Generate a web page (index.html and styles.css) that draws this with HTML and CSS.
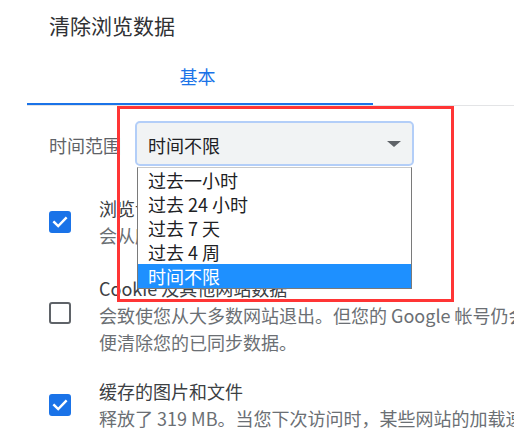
FILE: index.html
```html
<!DOCTYPE html>
<html lang="zh-CN">
<head>
<meta charset="utf-8">
<title>清除浏览数据</title>
<link rel="stylesheet" href="styles.css">
</head>
<body>
<div class="dialog">
  <h1 class="title">清除浏览数据</h1>
  <div class="tabs">
    <div class="tab tab-active">基本</div>
  </div>

  <div class="range-row">
    <span class="range-label">时间范围</span>
    <div class="select-wrap">
      <div class="select">
        <span class="select-value">时间不限</span>
        <span class="select-arrow"></span>
      </div>
      <ul class="dropdown">
        <li class="dropdown-item">过去一小时</li>
        <li class="dropdown-item">过去 24 小时</li>
        <li class="dropdown-item">过去 7 天</li>
        <li class="dropdown-item">过去 4 周</li>
        <li class="dropdown-item dropdown-item-selected">时间不限</li>
      </ul>
    </div>
  </div>

  <div class="options">
    <div class="option option-first">
      <span class="checkbox checkbox-checked">
        <svg viewBox="0 0 22 22" width="22" height="22"><path d="M5.2 11.2 L9.2 15 L16.8 7.2" fill="none" stroke="#fff" stroke-width="2.4" stroke-linecap="square"/></svg>
      </span>
      <div class="option-text">
        <div class="option-title">浏览记录</div>
        <div class="option-sub">会从所有已同步的设备中清除历史记录</div>
      </div>
    </div>

    <div class="option option-second">
      <span class="checkbox checkbox-raised"></span>
      <div class="option-text">
        <div class="option-title">Cookie 及其他网站数据</div>
        <div class="option-sub">会致使您从大多数网站退出。但您的 Google 帐号仍会保持登录状态，以</div>
        <div class="option-sub">便清除您的已同步数据。</div>
      </div>
    </div>

    <div class="option option-third">
      <span class="checkbox checkbox-checked">
        <svg viewBox="0 0 22 22" width="22" height="22"><path d="M5.2 11.2 L9.2 15 L16.8 7.2" fill="none" stroke="#fff" stroke-width="2.4" stroke-linecap="square"/></svg>
      </span>
      <div class="option-text">
        <div class="option-title">缓存的图片和文件</div>
        <div class="option-sub">释放了 319 MB。当您下次访问时，某些网站的加载速度可能会更慢。</div>
      </div>
    </div>
  </div>

  <div class="highlight-box"></div>
</div>
</body>
</html>
```

FILE: styles.css
```css
html, body {
  margin: 0;
  padding: 0;
  background: #ffffff;
  overflow: hidden;
}

body {
  width: 514px;
  height: 442px;
  font-family: "Noto Sans CJK SC", "Noto Sans", sans-serif;
  color: #202124;
}

.dialog {
  position: relative;
  width: 760px;
}

.title {
  margin: 0;
  padding: 11px 0 2px 49px;
  font-size: 21px;
  font-weight: normal;
  line-height: 28px;
  color: #303134;
}

.tabs {
  display: flex;
  margin-left: 27px;
  border-bottom: 1px solid #e3e4e6;
}

.tab {
  width: 346px;
  box-sizing: border-box;
  padding: 21px 5px 13px 0;
  font-size: 18px;
  line-height: 28px;
  text-align: center;
  color: #5f6368;
  border-bottom: 2px solid transparent;
}

.tab-active {
  color: #1a73e8;
  border-bottom-color: #1a73e8;
}

.range-row {
  display: flex;
  align-items: center;
  margin-top: 15px;
  padding-left: 49px;
}

.range-label {
  width: 86px;
  padding-top: 2px;
  font-size: 18px;
  line-height: 28px;
  color: #5f6368;
  white-space: nowrap;
}

.select-wrap {
  position: relative;
}

.select {
  display: flex;
  align-items: center;
  justify-content: space-between;
  box-sizing: border-box;
  width: 279px;
  height: 45px;
  padding: 2px 11px 0 11px;
  background: #f1f3f4;
  border: 2px solid #b3cef8;
  border-radius: 5px;
}

.select-value {
  font-size: 18px;
  line-height: 28px;
  color: #202124;
}

.select-arrow {
  width: 0;
  height: 0;
  margin-top: -2px;
  border-left: 7px solid transparent;
  border-right: 7px solid transparent;
  border-top: 6px solid #5f6368;
}

.dropdown {
  position: absolute;
  top: 46px;
  left: 2px;
  width: 275px;
  box-sizing: border-box;
  margin: 0;
  padding: 0;
  list-style: none;
  background: #ffffff;
  border: 1px solid #7a7a7a;
  border-top-color: #c9c9c9;
  z-index: 2;
}

.dropdown-item {
  height: 24px;
  padding-left: 10px;
  font-size: 18px;
  line-height: 24px;
  color: #202124;
  white-space: nowrap;
}

.dropdown-item-selected {
  background: #1e90ff;
  color: #ffffff;
}

.options {
  padding-left: 49px;
}

.option {
  display: flex;
  align-items: center;
}

.option-first {
  margin-top: 28px;
}

.option-second {
  margin-top: 25px;
}

.option-third {
  margin-top: 21px;
}

.checkbox {
  flex: none;
  display: block;
  box-sizing: border-box;
  width: 22px;
  height: 22px;
  border-radius: 3px;
  border: 2px solid #5f6368;
}

.checkbox svg {
  display: block;
  margin: -2px;
}

.checkbox-checked {
  background: #1a73e8;
  border-color: #1a73e8;
}

.checkbox-raised {
  margin-bottom: 5px;
}

.option-text {
  margin-left: 28px;
  white-space: nowrap;
}

.option-title {
  font-size: 18px;
  line-height: 28px;
  color: #3c4043;
}

.option-sub {
  font-size: 18px;
  line-height: 27px;
  color: #6b6f74;
}

.highlight-box {
  position: absolute;
  left: 117px;
  top: 106px;
  width: 337px;
  height: 196px;
  box-sizing: border-box;
  border: 3px solid #ff3535;
  pointer-events: none;
  z-index: 3;
}
```
